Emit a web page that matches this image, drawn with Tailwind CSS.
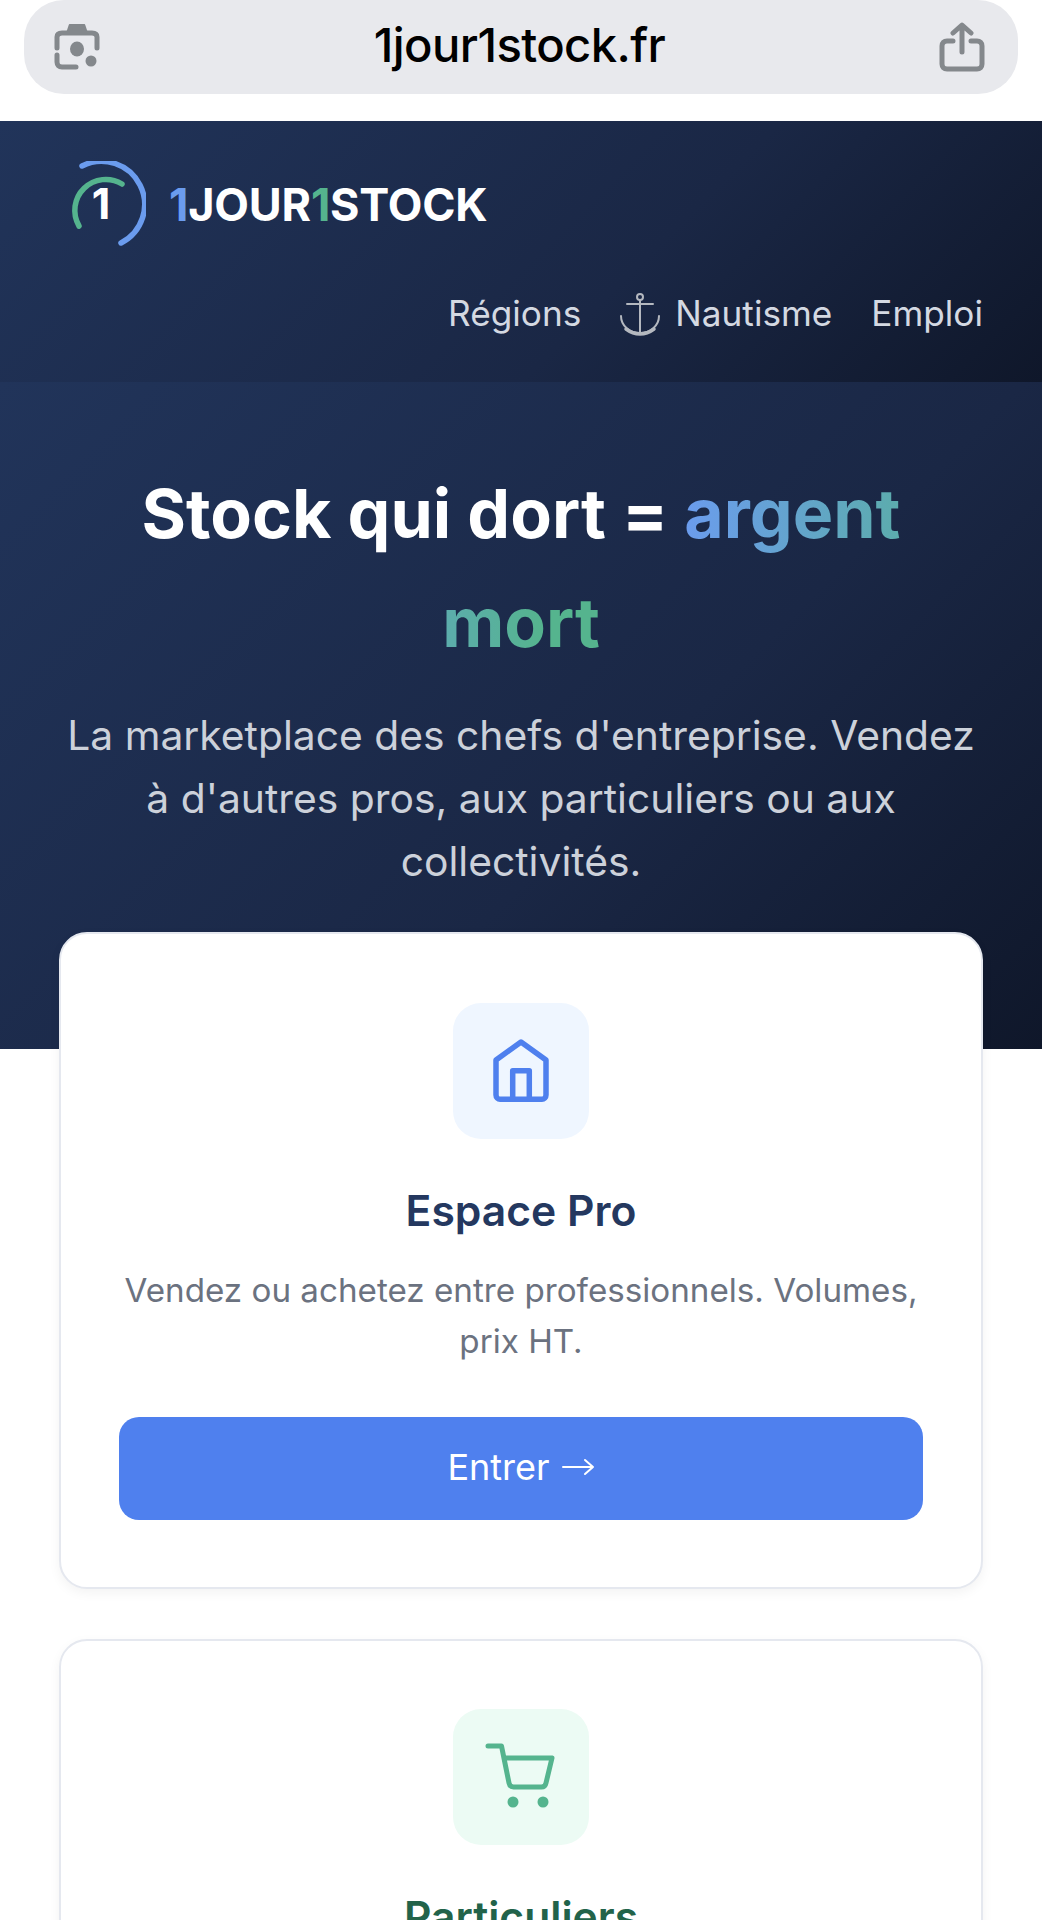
<!DOCTYPE html>
<html lang="fr">
<head>
    <meta charset="UTF-8">
    <meta name="viewport" content="width=device-width, initial-scale=1.0">
    <title>1jour1stock</title>
    <script src="https://cdn.jsdelivr.net/npm/@tailwindcss/browser@4"></script>
</head>
<body class="bg-white font-[Inter,sans-serif] overflow-hidden h-[1920px]">
    <!-- Address bar -->
    <div class="h-[121px] px-6">
        <div class="h-[94px] rounded-[40px] bg-[#e8e9ed] flex items-center justify-between pl-[30px] pr-[33px]">
            <svg class="w-[46px] h-[46px]" viewBox="0 0 46 46" fill="none" stroke="#84888c" stroke-width="5" stroke-linecap="round" stroke-linejoin="round">
                <path d="M3 24V13c0-3 2-4 5-4h30c3 0 5 1 5 4v11" />
                <path d="M15 8l2-6h12l2 6z" fill="#84888c" />
                <path d="M3 31v7c0 3 2 5 5 5h14" />
                <ellipse cx="23" cy="25" rx="7" ry="7.500" fill="#84888c" stroke="none" />
                <circle cx="37" cy="37" r="5.500" fill="#84888c" stroke="none" />
            </svg>
            <span class="text-[47.200px] tracking-[-0.6px] text-black font-medium leading-none -translate-y-[2px]">1jour1stock.fr</span>
            <svg class="w-[46px] h-[50px]" viewBox="0 0 46 50" fill="none" stroke="#84888c" stroke-width="5" stroke-linecap="round" stroke-linejoin="round">
                <path d="M23 30V4M14 11l9-8 9 8" />
                <path d="M14 19H8c-3 0-5 2-5 5v18c0 3 2 5 5 5h30c3 0 5-2 5-5V24c0-3-2-5-5-5h-6" />
            </svg>
        </div>
    </div>

    <!-- Header -->
    <header class="h-[261px] bg-[linear-gradient(135deg,#21345a,#1a2745_60%,#0f172a)] px-[59px] pt-[40px]">
        <a class="flex items-center gap-[23px] pl-[7px]">
            <svg class="w-[80px] h-[85px] shrink-0" viewBox="0 0 80 85" fill="none" stroke-linecap="round">
                <path d="M16 5A42 42 0 0 1 55 82" stroke="#6b9cee" stroke-width="5.500" />
                <path d="M13 65A31 31 0 0 1 56 23" stroke="#55b48e" stroke-width="5.500" />
                <text x="35" y="58" text-anchor="middle" fill="#fff" font-size="43" font-weight="700" font-family="Inter" stroke="none">1</text>
            </svg>
            <span class="text-[45px] font-bold text-white tracking-[-0.2px] leading-none pt-[2px]"><span class="text-[#6b9cee]">1</span>JOUR<span class="text-[#55b48e]">1</span>STOCK</span>
        </a>
        <nav class="flex justify-end items-center gap-[39px] mt-[46px] text-[35.200px] text-[#d4d9e2] leading-none">
            <a>Régions</a>
            <a class="flex items-center gap-[14px] -ml-px">
                <svg class="w-[42px] h-[44px]" viewBox="0 0 42 44" fill="none" stroke="#b4b8bf" stroke-width="2" stroke-linecap="round">
                    <circle cx="21" cy="5" r="3" />
                    <path d="M21 8v33M8 12h26" />
                    <path d="M2 24c0 10 9 17 19 17s19-7 19-17" />
                    <path d="M7 37c4 3 9 5 14 5s10-2 14-5" stroke-width="3.500" />
                </svg>
                Nautisme
            </a>
            <a>Emploi</a>
        </nav>
    </header>

    <!-- Hero -->
    <section class="h-[667px] bg-[linear-gradient(135deg,#21345a,#1a2745_60%,#0f172a)] px-[59px] pt-[77px] text-center">
        <h1 class="text-[68px] leading-[109px] font-bold text-white">Stock qui dort = <span class="bg-[linear-gradient(90deg,#6b9cee,#55b48e_85%)] bg-clip-text text-transparent">argent mort</span></h1>
        <p class="mt-[27px] -mx-2 text-[40.800px] leading-[63px] text-[#ccd1da]">La marketplace des chefs d'entreprise. Vendez à d'autres pros, aux particuliers ou aux collectivités.</p>
    </section>

    <!-- Cards -->
    <main class="px-[59px] -mt-[117px] flex flex-col gap-[50px]">
        <div class="h-[657px] bg-white rounded-[28px] border-2 border-[#e5e8ef] shadow-[0_4px_12px_rgba(0,0,0,0.05)] px-[58px] pt-[69px] text-center">
            <div class="w-[136px] h-[136px] mx-auto rounded-[28px] bg-[#eff6ff] flex items-center justify-center">
                <svg class="w-[64px] h-[64px]" viewBox="0 0 64 64" fill="none" stroke="#4f80ee" stroke-width="5.500" stroke-linejoin="round" stroke-linecap="round">
                    <path d="M32 3L7 21v35c0 2.500 2 4.300 4 4.300h42c2 0 4-1.800 4-4.300V21z" />
                    <path d="M23.700 60V31.700h16.600V60" />
                </svg>
            </div>
            <h2 class="mt-[47px] text-[42.600px] leading-[50px] font-semibold text-[#24385f]">Espace Pro</h2>
            <p class="mt-[29px] text-[33.200px] leading-[51px] text-[#6b7280]">Vendez ou achetez entre professionnels. Volumes, prix HT.</p>
            <a class="mt-[50px] h-[103px] rounded-[20px] bg-[#4f80ee] text-white text-[36px] flex items-center justify-center gap-[12px] pb-1">
                Entrer
                <svg class="w-[33px] h-[18px]" viewBox="0 0 33 18" fill="none" stroke="#fff" stroke-width="2" stroke-linecap="round" stroke-linejoin="round">
                    <path d="M1 9h30M23 2l8 7-8 7" />
                </svg>
            </a>
        </div>
        <div class="h-[656px] bg-white rounded-[28px] border-2 border-[#e5e8ef] shadow-[0_4px_12px_rgba(0,0,0,0.05)] px-[58px] pt-[68px] text-center">
            <div class="w-[136px] h-[136px] mx-auto rounded-[28px] bg-[#ecfbf4] flex items-center justify-center">
                <svg class="w-[72px] h-[68px]" viewBox="0 0 72 68" fill="none" stroke="#55b48e" stroke-width="5" stroke-linejoin="round" stroke-linecap="round">
                    <path d="M3 3h13.500L24 40c.5 2.500 2 4 4.500 4h28c2.500 0 4-1.500 4.500-4l6-25H21" />
                    <circle cx="28" cy="59" r="5.500" fill="#55b48e" stroke="none" />
                    <circle cx="58" cy="59" r="5.500" fill="#55b48e" stroke="none" />
                </svg>
            </div>
            <h2 class="mt-[47px] text-[42.600px] leading-[50px] font-semibold text-[#22634a]">Particuliers</h2>
        </div>
    </main>
</body>
</html>
